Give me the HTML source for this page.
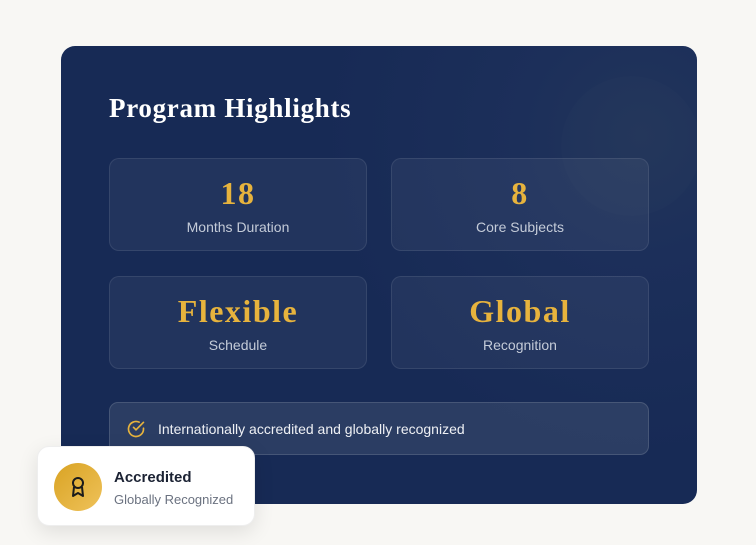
<!DOCTYPE html>
<html><head><style>
body{margin:0;width:756px;height:545px;background:#f8f7f4;position:relative;overflow:hidden;font-family:"Liberation Sans",sans-serif}
.card{position:absolute;left:61px;top:46px;width:636px;height:458px;border-radius:14px;background:radial-gradient(circle at 580px 90px,#22355a 0,#1c2f5a 120px,#172a55 320px);overflow:hidden}
.circ{position:absolute;left:500px;top:30px;width:140px;height:140px;border-radius:50%;background:rgba(255,255,255,0.012)}
h2{position:absolute;left:48px;top:47px;margin:0;font-family:"Liberation Serif",serif;font-weight:bold;font-size:27px;letter-spacing:0.7px;color:#fff}
.box{position:absolute;width:256px;height:91px;border:1px solid rgba(255,255,255,0.09);border-radius:10px;background:rgba(255,255,255,0.05);text-align:center}
.n{font-family:"Liberation Serif",serif;font-weight:bold;color:#e7b33d;font-size:32px;letter-spacing:1.5px;margin-top:16px;line-height:36px}
.l{color:#c4cbd8;font-size:14px;margin-top:8px}
.ban{position:absolute;left:48px;top:356px;width:538px;height:51px;border:1px solid rgba(255,255,255,0.13);border-radius:9px;background:rgba(120,130,150,0.22);color:#eef0f4;font-size:14px}
.badge{position:absolute;left:37px;top:446px;width:218px;height:80px;background:#fff;border-radius:12px;box-shadow:0 6px 20px rgba(0,0,0,0.1);border:1px solid #eee;box-sizing:border-box}
.ic{position:absolute;left:16px;top:16px;width:48px;height:48px;border-radius:50%;background:linear-gradient(135deg,#d9a323,#efc25a)}
</style></head><body>
<div class="card"><div class="circ"></div>
<h2>Program Highlights</h2>
<div class="box" style="left:48px;top:112px"><div class="n">18</div><div class="l">Months Duration</div></div>
<div class="box" style="left:330px;top:112px"><div class="n">8</div><div class="l">Core Subjects</div></div>
<div class="box" style="left:48px;top:230px"><div class="n">Flexible</div><div class="l">Schedule</div></div>
<div class="box" style="left:330px;top:230px"><div class="n">Global</div><div class="l">Recognition</div></div>
<div class="ban"><svg style="position:absolute;left:16px;top:16px" width="20" height="20" viewBox="0 0 24 24" fill="none" stroke="#e7b33d" stroke-width="2" stroke-linecap="round"><path d="M21 11.1V12a9 9 0 1 1-5.3-8.2"/><path d="M21 4 12 13l-3-3"/></svg><span style="position:absolute;left:48px;top:18px">Internationally accredited and globally recognized</span></div>
</div>
<div class="badge"><div class="ic"><svg style="position:absolute;left:14px;top:12px" width="20" height="24" viewBox="0 0 20 24" fill="none" stroke="#1b1b1b" stroke-width="2" stroke-linejoin="round"><circle cx="10" cy="8" r="5"/><path d="M6 12l-1 9 5-3 5 3-1-9"/></svg></div>
<div style="position:absolute;left:76px;top:22px;font-size:15px;color:#1b2233;font-weight:bold">Accredited</div>
<div style="position:absolute;left:76px;top:45px;font-size:13px;color:#6b7280">Globally Recognized</div></div>
</body></html>
